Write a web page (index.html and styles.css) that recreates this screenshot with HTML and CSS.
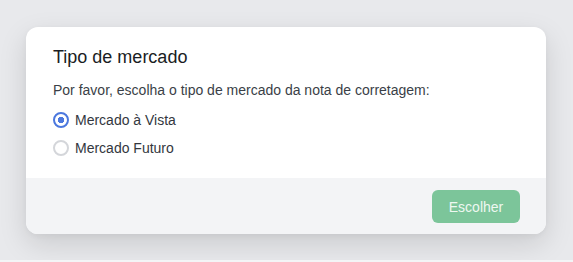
FILE: index.html
```html
<!DOCTYPE html>
<html lang="pt-BR">

<head>
    <meta charset="UTF-8">
    <meta name="viewport" content="width=device-width, initial-scale=1.0">
    <title>Tipo de mercado</title>
    <link rel="stylesheet" href="styles.css">
</head>

<body>
    <div class="overlay">
        <div class="modal">
            <div class="modal-body">
                <h3 class="modal-title">Tipo de mercado</h3>
                <p class="modal-text">Por favor, escolha o tipo de mercado da nota de corretagem:</p>
                <div class="options">
                    <label class="option">
                        <input type="radio" name="mercado" value="vista" checked>
                        <span>Mercado à Vista</span>
                    </label>
                    <label class="option">
                        <input type="radio" name="mercado" value="futuro">
                        <span>Mercado Futuro</span>
                    </label>
                </div>
            </div>
            <div class="modal-footer">
                <button type="button" class="btn">Escolher</button>
            </div>
        </div>
    </div>
</body>

</html>
```

FILE: styles.css
```css
html {
    background-color: #f3f4f6;
}

body {
    font-family: 'Liberation Sans', Arial, Helvetica, sans-serif;
    margin: 0;
    padding: 0;
}

.overlay {
    height: 260px;
    background-color: #e8e9ec;
    display: flex;
    align-items: flex-start;
    padding: 27px 0 0 26px;
    box-sizing: border-box;
}

.modal {
    width: 520px;
    background-color: white;
    border-radius: 12px;
    overflow: hidden;
    box-shadow: 0 10px 28px rgba(0, 0, 0, 0.13), 0 2px 6px rgba(0, 0, 0, 0.04);
}

.modal-body {
    padding: 16px 27px 18px;
}

.modal-title {
    margin: 0;
    font-size: 18px;
    line-height: 28px;
    font-weight: normal;
    color: #1a1d23;
}

.modal-text {
    margin: 9px 0 8px;
    font-size: 14px;
    line-height: 20px;
    color: #3a3f47;
}

.options {
    display: flex;
    flex-direction: column;
    gap: 4px;
}

.option {
    display: flex;
    align-items: center;
    gap: 6px;
    height: 24px;
    font-size: 14px;
    color: #33373e;
}

.option input {
    appearance: none;
    -webkit-appearance: none;
    margin: 0;
    width: 16px;
    height: 16px;
    border: 2px solid #d4d6da;
    border-radius: 50%;
    box-sizing: border-box;
    background-color: white;
}

.option input:checked {
    border-color: #4c78de;
    background: radial-gradient(circle, #4c78de 0 3px, white 3.5px);
}

.modal-footer {
    background-color: #f3f4f6;
    padding: 12px 26px 11px;
    display: flex;
    justify-content: flex-end;
}

.btn {
    width: 88px;
    height: 33px;
    border: none;
    border-radius: 6px;
    background-color: #7cc59a;
    color: #eef8f1;
    font-family: inherit;
    font-size: 14px;
    cursor: pointer;
}
```
